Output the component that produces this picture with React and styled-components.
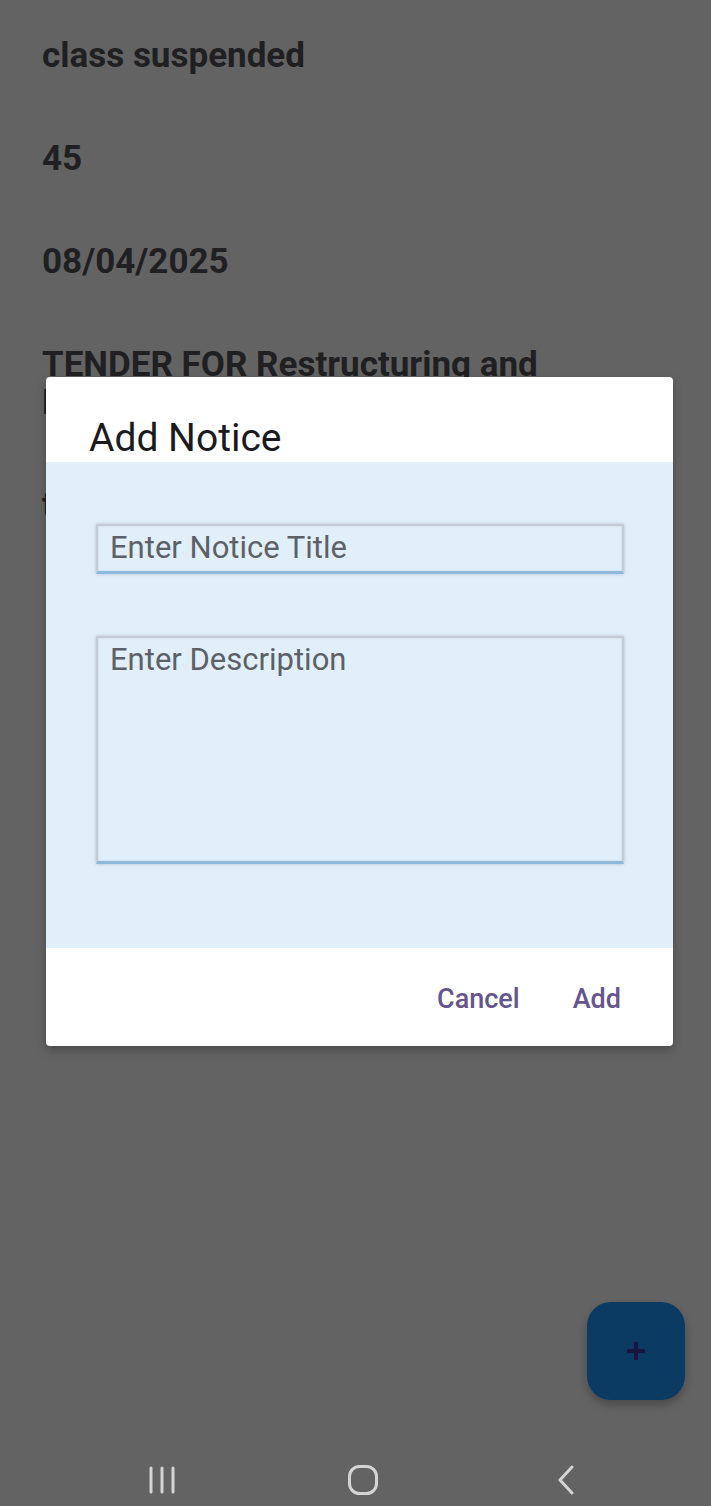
import React from "react";
import styled, { createGlobalStyle } from "styled-components";

const Global = createGlobalStyle`
  html, body { margin: 0; padding: 0; background: #636363; }
  body { font-family: Roboto, "Noto Sans", sans-serif; }
  * { box-sizing: border-box; }
`;

const Screen = styled.div`
  position: relative;
  width: 711px;
  height: 1506px;
  overflow: hidden;
  background: #636363;
  display: flex;
  flex-direction: column;
`;

const List = styled.div`
  display: flex;
  flex-direction: column;
  gap: 65px;
  padding: 37px 40px 0 42px;
`;

const Item = styled.div`
  font-size: 35px;
  line-height: 38px;
  font-weight: 700;
  color: #202022;
`;

const Backdrop = styled.div`
  position: absolute;
  inset: 0;
  padding: 377px 38px 0 46px;
`;

const Dialog = styled.div`
  width: 627px;
  background: #ffffff;
  border-radius: 4px;
  overflow: hidden;
  box-shadow: 0 4px 10px rgba(0, 0, 0, 0.25);
  display: flex;
  flex-direction: column;
`;

const Header = styled.div`
  height: 85px;
  padding: 41px 0 0 43px;
  font-size: 39px;
  line-height: 40px;
  font-weight: 400;
  color: #1b1b1f;
`;

const Body = styled.div`
  background: #e1effa;
  padding: 62px 49px 84px 50px;
  display: flex;
  flex-direction: column;
  gap: 62px;
`;

const Field = styled.div`
  height: ${(p) => p.$h}px;
  border: 2px solid #c3ccd5;
  border-bottom: 3px solid #8db9dd;
  box-shadow: 0 0 3px rgba(90, 110, 130, 0.35), inset 0 0 2px rgba(90, 110, 130, 0.25);
  padding: ${(p) => (p.$top ? "4px 12px" : "0 12px 2px")};
  display: flex;
  align-items: ${(p) => (p.$top ? "flex-start" : "center")};
  font-size: 31px;
  line-height: 36px;
  color: #5c6168;
`;

const Footer = styled.div`
  height: 98px;
  display: flex;
  justify-content: flex-end;
  align-items: center;
  gap: 53px;
  padding: 4px 52px 0 0;
`;

const TextButton = styled.span`
  font-size: 27px;
  font-weight: 500;
  color: #65558f;
  line-height: 30px;
`;

const Fab = styled.div`
  position: absolute;
  left: 587px;
  top: 1302px;
  width: 98px;
  height: 98px;
  border-radius: 24px;
  background: #0b3a62;
  box-shadow: 0 5px 8px rgba(0, 0, 0, 0.25);
  display: flex;
  align-items: center;
  justify-content: center;
`;

const NavBar = styled.div`
  margin-top: auto;
  height: 54px;
  display: flex;
  align-items: flex-start;
  padding: 13px 0 0 148px;
`;

const NavIcon = styled.svg`
  display: block;
  margin-right: ${(p) => p.$gap || 0}px;
`;

export default function App() {
  return (
    <Screen>
      <Global />
      <List>
        <Item>class suspended</Item>
        <Item>45</Item>
        <Item>08/04/2025</Item>
        <Item>
          TENDER FOR Restructuring and
          <br />
          Renovation of Building
        </Item>
        <Item>tender notice</Item>
      </List>

      <NavBar>
        <NavIcon width="28" height="30" viewBox="0 0 28 30" $gap={172}>
          <g stroke="#d4d4d4" strokeWidth="3" strokeLinecap="round">
            <line x1="3" y1="3" x2="3" y2="27" />
            <line x1="14" y1="3" x2="14" y2="27" />
            <line x1="25" y1="3" x2="25" y2="27" />
          </g>
        </NavIcon>
        <NavIcon width="30" height="30" viewBox="0 0 30 30" $gap={178}>
          <rect x="1.5" y="1.5" width="27" height="27" rx="10" fill="none" stroke="#d4d4d4" strokeWidth="3" />
        </NavIcon>
        <NavIcon width="20" height="30" viewBox="0 0 20 30">
          <polyline points="16,2 4,15 16,28" fill="none" stroke="#d4d4d4" strokeWidth="3" strokeLinecap="round" strokeLinejoin="round" />
        </NavIcon>
      </NavBar>

      <Fab>
        <svg width="22" height="22" viewBox="0 0 22 22">
          <g stroke="#1a1440" strokeWidth="4">
            <line x1="11" y1="2" x2="11" y2="20" />
            <line x1="2" y1="11" x2="20" y2="11" />
          </g>
        </svg>
      </Fab>

      <Backdrop>
        <Dialog>
          <Header>Add Notice</Header>
          <Body>
            <Field $h={50}>Enter Notice Title</Field>
            <Field $h={228} $top>Enter Description</Field>
          </Body>
          <Footer>
            <TextButton>Cancel</TextButton>
            <TextButton>Add</TextButton>
          </Footer>
        </Dialog>
      </Backdrop>
    </Screen>
  );
}
